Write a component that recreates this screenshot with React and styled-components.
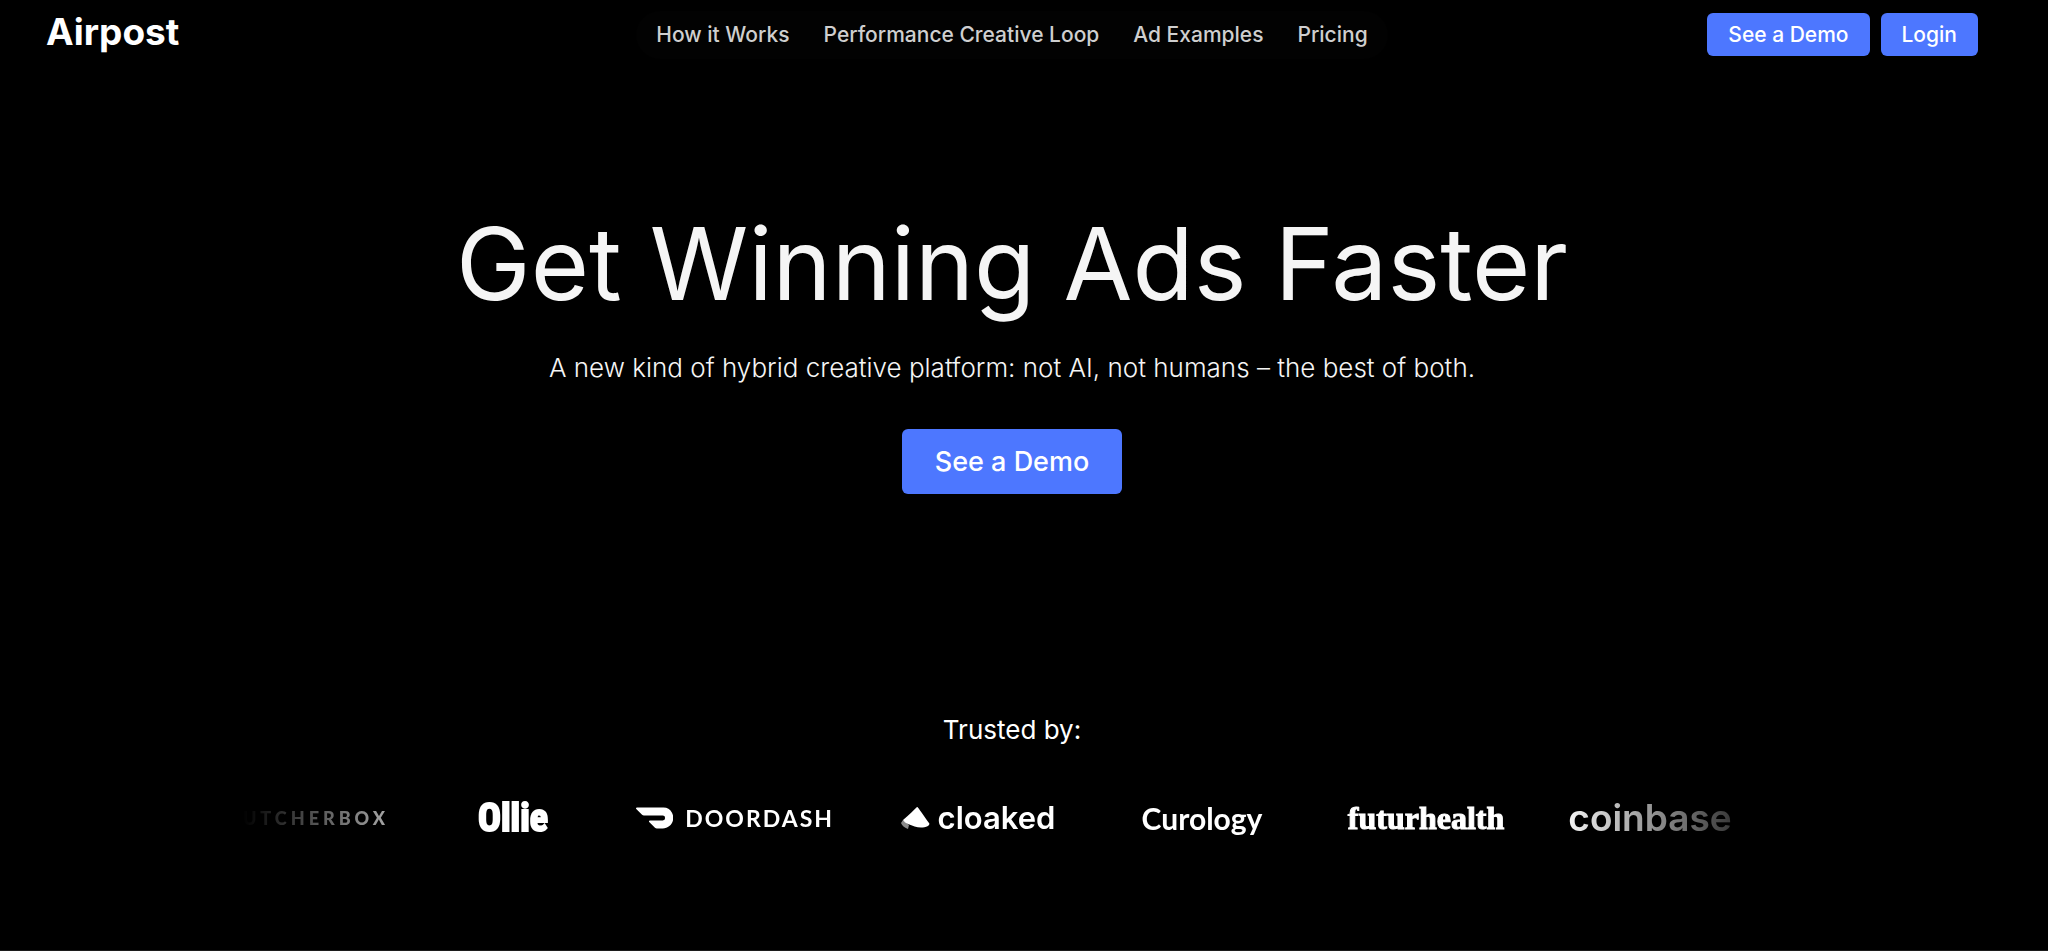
import React from 'react';
import styled, { createGlobalStyle } from 'styled-components';

const GlobalStyle = createGlobalStyle`
  *, *::before, *::after {
    box-sizing: border-box;
  }

  body {
    margin: 0;
    background: #000;
    color: #fff;
    font-family: Inter, 'Liberation Sans', sans-serif;
  }
`;

const Page = styled.div`
  min-height: 100vh;
  display: flex;
  flex-direction: column;
  padding-right: 24px;
  border-bottom: 1px solid #1c1c1c;
`;

const Header = styled.header`
  display: grid;
  grid-template-columns: 1fr auto 1fr;
  align-items: center;
  height: 69px;
  padding: 0 46px;
`;

const Logo = styled.a`
  justify-self: start;
  padding-bottom: 6px;
  color: #fff;
  font-size: 37px;
  font-weight: 700;
  line-height: 40px;
  text-decoration: none;
`;

const Nav = styled.nav`
  display: flex;
  gap: 34px;
  padding: 12px 20px;
  border-radius: 24px;
  background: #020202;
`;

const NavLink = styled.a`
  color: #cfcfcf;
  font-size: 21px;
  font-weight: 500;
  line-height: 24px;
  text-decoration: none;
  white-space: nowrap;
`;

const Actions = styled.div`
  display: flex;
  justify-self: end;
  gap: 11px;
`;

const Button = styled.button`
  height: ${({ $large }) => ($large ? '65px' : '43px')};
  padding: 0 ${({ $large }) => ($large ? '33px' : '21px')};
  border: none;
  border-radius: 6px;
  background: #4d77ff;
  color: #fff;
  font-family: inherit;
  font-size: ${({ $large }) => ($large ? '27px' : '21px')};
  font-weight: 500;
  white-space: nowrap;
  cursor: pointer;

  &:hover {
    background: #3f68ee;
  }
`;

const Hero = styled.main`
  display: flex;
  flex-direction: column;
  align-items: center;
  padding-top: 131px;
  text-align: center;
`;

const Title = styled.h1`
  margin: 0;
  color: #f5f5f5;
  font-size: 100px;
  font-weight: 400;
  line-height: 128px;
`;

const Subtitle = styled.p`
  margin: 24px 0 45px;
  color: #f5f5f5;
  font-size: 26px;
  font-weight: 300;
  line-height: 32px;
`;

const Trusted = styled.section`
  display: flex;
  flex-direction: column;
  align-items: center;
  gap: 48px;
  padding-top: 220px;
`;

const TrustedTitle = styled.h2`
  margin: 0;
  font-size: 26px;
  font-weight: 400;
  line-height: 32px;
`;

const Marquee = styled.div`
  display: flex;
  justify-content: center;
  width: 100%;
  overflow: hidden;
  mask-image: linear-gradient(to right, transparent 12%, #000 23%, #000 77%, transparent 88%);
`;

const Track = styled.ul`
  display: flex;
  flex-shrink: 0;
  align-items: center;
  gap: 64px;
  height: 48px;
  margin: 0;
  padding: 0 68px 0 0;
  list-style: none;
`;

const Brand = styled.li`
  display: flex;
  flex-shrink: 0;
  align-items: center;
  justify-content: center;
  gap: ${({ $gap }) => $gap || 0}px;
  width: ${({ $width }) => $width || 160}px;
  line-height: 40px;
  white-space: nowrap;
`;

const Butcherbox = styled.span`
  font-family: Lato, sans-serif;
  font-size: 18px;
  font-weight: 900;
  letter-spacing: 4px;
`;

const Ollie = styled.span`
  font-family: 'Liberation Sans Narrow', 'Roboto Condensed', sans-serif;
  font-size: 38px;
  font-weight: 700;
  -webkit-text-stroke: 2px #fff;
`;

const Doordash = styled.span`
  font-family: Lato, sans-serif;
  font-size: 23px;
  font-weight: 700;
  letter-spacing: 2px;
`;

const Cloaked = styled.span`
  font-size: 31px;
  font-weight: 600;
`;

const Curology = styled.span`
  font-family: Lato, sans-serif;
  font-size: 30px;
  font-weight: 700;
`;

const Futurhealth = styled.span`
  font-family: 'Liberation Serif', serif;
  font-size: 32px;
  font-weight: 700;
  -webkit-text-stroke: 1px #fff;
`;

const Coinbase = styled.span`
  font-size: 37px;
  font-weight: 600;
`;

const DoordashMark = () => (
  <svg width="42" height="24" viewBox="0 5 24 14" fill="#fff" aria-hidden="true">
    <path d="M23.071 8.409a6.09 6.09 0 00-5.396-3.228H.584A.589.589 0 00.17 6.184L3.894 9.93a1.752 1.752 0 001.242.516h12.049a1.554 1.554 0 11.031 3.108H8.91a.589.589 0 00-.415 1.003l3.725 3.747a1.75 1.75 0 001.242.516h3.757c4.887 0 8.584-5.225 5.852-10.413" />
  </svg>
);

const CloakedMark = () => (
  <svg width="29" height="24" viewBox="0 0 29 24" aria-hidden="true">
    <path fill="#8a8a8a" d="M2 14 0 17c1 3 4 5 7 6l1-4z" />
    <path fill="#fff" d="M16 1c1 0 2 2 12 16 1 1 0 2-1 3-7 3-13 1-20-2-2-1-4-2-5-4C8 9 13 4 16 1z" />
  </svg>
);

const navItems = ['How it Works', 'Performance Creative Loop', 'Ad Examples', 'Pricing'];

const App = () => (
  <>
    <GlobalStyle />
    <Page>
      <Header>
        <Logo href="#">Airpost</Logo>
        <Nav>
          {navItems.map((item) => (
            <NavLink key={item} href="#">{item}</NavLink>
          ))}
        </Nav>
        <Actions>
          <Button type="button">See a Demo</Button>
          <Button type="button">Login</Button>
        </Actions>
      </Header>

      <Hero>
        <Title>Get Winning Ads Faster</Title>
        <Subtitle>
          A new kind of hybrid creative platform: not AI, not humans – the best of both.
        </Subtitle>
        <Button type="button" $large>See a Demo</Button>
      </Hero>

      <Trusted>
        <TrustedTitle>Trusted by:</TrustedTitle>
        <Marquee>
          <Track>
            <Brand $width={164}><Butcherbox>BUTCHERBOX</Butcherbox></Brand>
            <Brand $width={118}><Ollie>Ollie</Ollie></Brand>
            <Brand $width={198} $gap={12}>
              <DoordashMark />
              <Doordash>DOORDASH</Doordash>
            </Brand>
            <Brand $gap={8}>
              <CloakedMark />
              <Cloaked>cloaked</Cloaked>
            </Brand>
            <Brand><Curology>Curology</Curology></Brand>
            <Brand><Futurhealth>futurhealth</Futurhealth></Brand>
            <Brand><Coinbase>coinbase</Coinbase></Brand>
          </Track>
        </Marquee>
      </Trusted>
    </Page>
  </>
);

export default App;
